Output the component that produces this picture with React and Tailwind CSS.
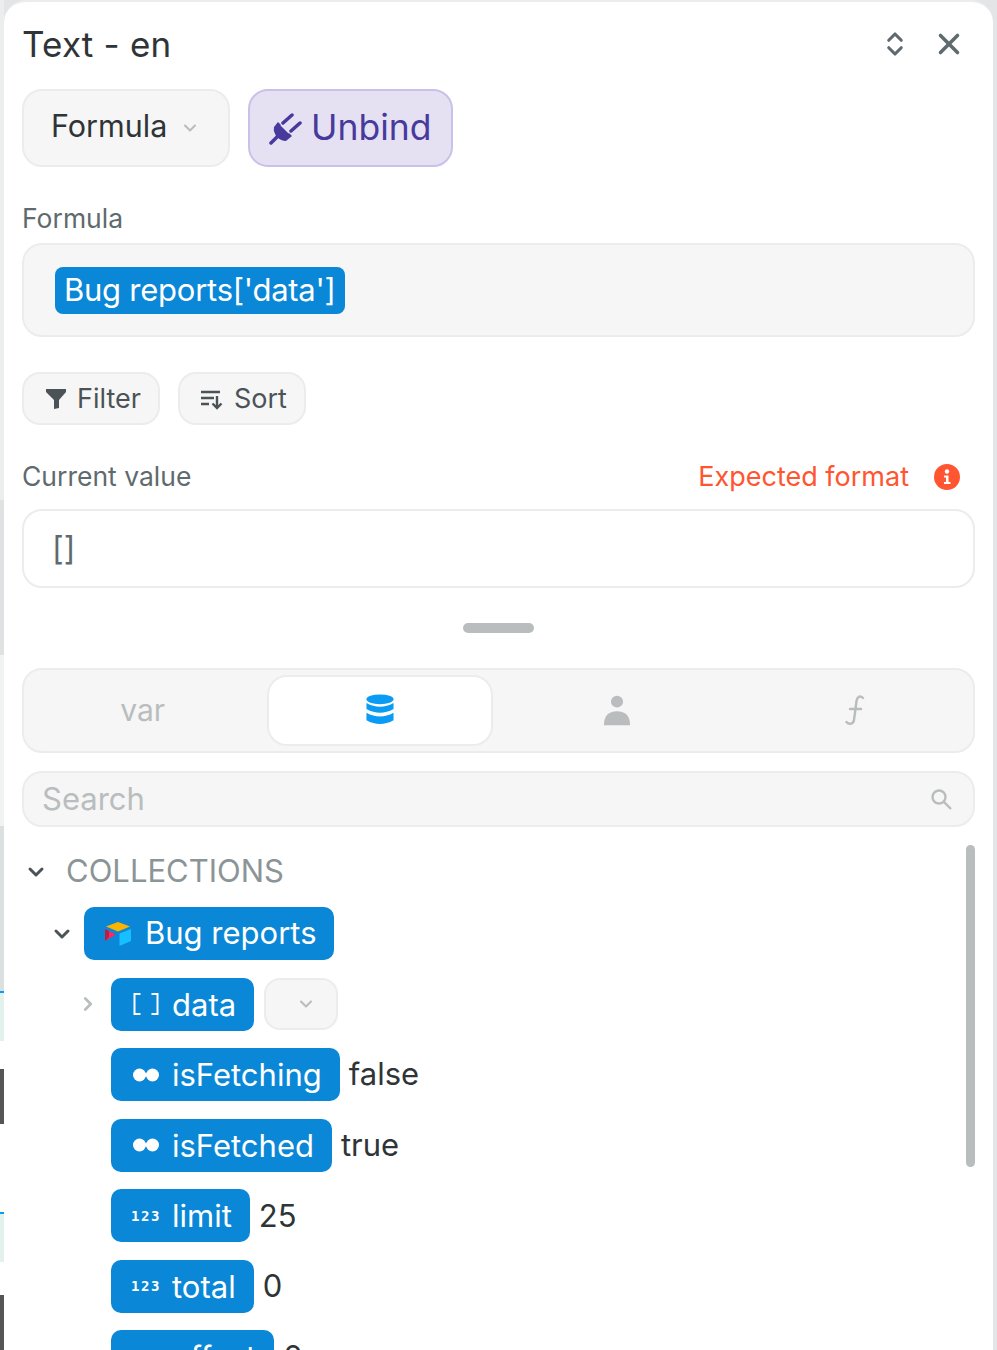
import React from 'react'
import { ChevronDown, ChevronRight, ChevronsUpDown, X } from 'lucide-react'

const Chip = ({ icon, label, value, caret }) => (
	<div className="flex items-center h-[53px] mb-[17.6px] pl-[107px]">
		<div className="flex items-center h-[53px] pl-[21px] pr-[18px] rounded-[10px] bg-[#0a87d6] text-white text-[31px] leading-none">
			<span className="flex items-center justify-center w-[28px] mr-[12px]">{icon}</span>
			<span>{label}</span>
		</div>
		{value && <span className="ml-[9px] text-[31px] text-[#2f3437]">{value}</span>}
		{caret && (
			<div className="ml-[10px] flex items-center justify-center w-[74px] h-[52px] pl-[9px] rounded-[16px] bg-[#f6f6f6] border-2 border-[#ececec]">
				<ChevronDown size={20} strokeWidth={2.5} className="text-[#b9bdbe]" />
			</div>
		)}
	</div>
)

const Toggle = () => (
	<svg width="28" height="16" viewBox="0 0 28 16" fill="white">
		<circle cx="7.5" cy="8" r="6.5" />
		<circle cx="20.5" cy="8" r="6.5" />
		<rect x="13" y="6.5" width="2" height="3" />
	</svg>
)

const Numbers = () => (
	<span className="font-['DejaVu_Sans_Mono',monospace] font-bold text-[14px] leading-none tracking-[1.5px] text-white">123</span>
)

const Brackets = () => (
	<svg width="26" height="22" viewBox="0 0 26 22" fill="none" stroke="white" strokeWidth="2">
		<path d="M7.5 1 H1.5 V21 H7.5" />
		<path d="M18.5 1 H24.5 V21 H18.5" />
	</svg>
)

const Airtable = () => (
	<svg width="28" height="26" viewBox="0 0 28 26">
		<path d="M14 1 L26 5.5 L14 10.5 L2 5.5 Z" fill="#fcb400" />
		<path d="M15.5 12.5 L27 8 V20 L15.5 25 Z" fill="#18bfff" />
		<path d="M1 8 L12 13.5 L1 20 Z" fill="#f82b60" />
		<path d="M1 8 L5 10 V16 L1 20 Z" fill="#ba1e45" />
	</svg>
)

export default function App() {
	return (
		<div className="w-[997px] h-[1350px] overflow-hidden relative flex bg-[#e3e5e6] font-['Inter','Liberation_Sans',sans-serif]">
			{/* Page peeking out behind the panel */}
			<div className="w-[4px] shrink-0 flex flex-col">
				<div className="h-[500px] bg-[#eceded]" />
				<div className="h-[155px] bg-[#dfe1e2]" />
				<div className="h-[172px] bg-[#f1f2f2]" />
				<div className="h-[165px] bg-[#dcdfe0]" />
				<div className="h-[2px] bg-[#0a9bf5]" />
				<div className="h-[48px] bg-[#e3f1ec]" />
				<div className="h-[28px] bg-white" />
				<div className="h-[55px] bg-[#555]" />
				<div className="h-[88px] bg-white" />
				<div className="h-[2px] bg-[#0a9bf5]" />
				<div className="h-[48px] bg-[#e3f1ec]" />
				<div className="h-[33px] bg-white" />
				<div className="h-[55px] bg-[#555]" />
			</div>
			<div className="relative w-[989px] shrink-0 h-[1350px] bg-white rounded-t-[22px] border-t-2 border-[#ececec] overflow-hidden">
				<div className="pl-[18px] pr-[18px]">
					{/* Header */}
					<div className="flex items-center justify-between h-[84px]">
						<span className="text-[35px] text-[#2f3437] tracking-[0.2px]">Text - en</span>
						<div className="flex items-center gap-[22px] pr-[9px]">
							<ChevronsUpDown size={30} strokeWidth={2.5} className="text-[#5f6a6e]" />
							<X size={34} strokeWidth={2.5} className="text-[#5f6a6e]" />
						</div>
					</div>

					{/* Mode buttons */}
					<div className="flex gap-[18px] mt-[3px]">
						<div className="flex items-center w-[208px] h-[78px] pl-[27px] pb-[4px] rounded-[20px] bg-[#f6f6f6] border-2 border-[#ececec] text-[#2f3437] text-[30.5px]">
							<span>Formula</span>
							<ChevronDown size={20} strokeWidth={2.5} className="ml-[13px] mt-[4px] text-[#b9bdbe]" />
						</div>
						<div className="flex items-center w-[205px] h-[78px] pl-[19px] rounded-[20px] bg-[#e5e1f3] border-2 border-[#c9c1ea] text-[#473a9c] text-[35.5px]">
							<svg width="33" height="33" viewBox="0 0 33 33" fill="#473a9c" className="mr-[9px]">
								<path d="M2 31 L9 24 M14 11 L23 3 M22 19 L31 11" stroke="#473a9c" strokeWidth="3.5" strokeLinecap="round" />
								<path d="M9 10 L23 24 L17 29 Q12 29 8 25 Q4 20 5 15 Z" />
								<path d="M12 13 L20 21" stroke="#e5e1f3" strokeWidth="1.5" />
							</svg>
							<span>Unbind</span>
						</div>
					</div>

					{/* Formula */}
					<div className="mt-[34px] text-[26.5px] leading-[34px] text-[#5f6a6e]">Formula</div>
					<div className="mt-[8px] flex items-center h-[94px] pl-[31px] rounded-[20px] bg-[#f6f6f6] border-2 border-[#ececec]">
						<span className="flex items-center h-[47px] px-[9px] rounded-[8px] bg-[#0a87d6] text-white text-[31px] tracking-[-0.25px]">Bug reports['data']</span>
					</div>

					{/* Filter / Sort */}
					<div className="flex gap-[18px] mt-[35px]">
						<div className="flex items-center w-[138px] h-[53px] pl-[21px] pt-[1px] rounded-[18px] bg-[#f6f6f6] border-2 border-[#ececec] text-[27px] text-[#4b5356]">
							<svg width="22" height="22" viewBox="0 0 22 22" fill="#4b5356" className="mr-[10px]">
								<path d="M1 1 H21 V4 L14 12 V20 L9 21 V12 L1 4 Z" />
							</svg>
							<span>Filter</span>
						</div>
						<div className="flex items-center w-[128px] h-[53px] pl-[20px] pt-[1px] rounded-[18px] bg-[#f6f6f6] border-2 border-[#ececec] text-[27px] text-[#4b5356]">
							<svg width="23" height="21" viewBox="0 0 23 21" fill="none" stroke="#4b5356" strokeWidth="2.4" className="mr-[11px]">
								<path d="M1 3 H20 M1 9 H14 M1 15 H9 M17 7 V19 M12.5 14.5 L17 19 L21.5 14.5" />
							</svg>
							<span>Sort</span>
						</div>
					</div>

					{/* Current value */}
					<div className="flex items-center justify-between mt-[27px] h-[50px]">
						<span className="text-[26.5px] text-[#5f6a6e]">Current value</span>
						<div className="flex items-center pr-[15px]">
							<span className="text-[27px] text-[#ff5530]">Expected format</span>
							<svg width="26" height="26" viewBox="0 0 26 26" className="ml-[25px]">
								<circle cx="13" cy="13" r="13" fill="#ff5530" />
								<circle cx="13" cy="7.5" r="2.2" fill="white" />
								<path d="M10 11.5 H14.5 V18 H16.5 V20 H10 V18 H12 V13.5 H10 Z" fill="white" />
							</svg>
						</div>
					</div>
					<div className="mt-[7px] flex items-center h-[79px] pl-[28px] rounded-[20px] bg-white border-2 border-[#ececec] text-[32px] text-[#5f6a6e]">[]</div>

					{/* Resize handle */}
					<div className="flex justify-center mt-[35px]">
						<div className="w-[71px] h-[10px] rounded-full bg-[#b9bdbe]" />
					</div>

					{/* Tabs */}
					<div className="mt-[35px] grid grid-cols-4 items-center h-[85px] rounded-[20px] bg-[#f6f6f6] border-2 border-[#ececec]">
						<div className="flex items-center justify-center text-[30px] text-[#b9bdbe]">var</div>
						<div className="px-[6px]">
							<div className="flex items-center justify-center h-[71px] rounded-[20px] bg-white border-2 border-[#ececec]">
								<svg width="28" height="33" viewBox="0 0 30 44" fill="#0a9bf5" preserveAspectRatio="none">
									<ellipse cx="15" cy="7" rx="14.5" ry="6.5" />
									<path d="M0.5 12 Q15 22 29.5 12 V20 Q15 30 0.5 20 Z" />
									<path d="M0.5 25 Q15 35 29.5 25 V35 Q15 45 0.5 35 Z" />
								</svg>
							</div>
						</div>
						<div className="flex items-center justify-center">
							<svg width="28" height="31" viewBox="0 0 30 42" fill="#b9bdbe" preserveAspectRatio="none">
								<ellipse cx="15" cy="9" rx="6.5" ry="8" />
								<path d="M1 41 Q1 22 15 22 Q29 22 29 41 Z" />
							</svg>
						</div>
						<div className="flex items-center justify-center">
							<svg width="21" height="31" viewBox="0 0 21 31" fill="none" stroke="#b9bdbe" strokeWidth="2.4" strokeLinecap="round">
								<path d="M19 3 C16 0 13 2 12.5 6 L10 25 C9.5 29 5 30 2.5 27" />
								<path d="M6 14 H17" />
							</svg>
						</div>
					</div>

					{/* Search */}
					<div className="mt-[18px] flex items-center justify-between h-[56px] pl-[18px] pr-[21px] rounded-[20px] bg-[#f6f6f6] border-2 border-[#ececec]">
						<span className="text-[31px] text-[#b9bdbe]">Search</span>
						<svg width="21" height="21" viewBox="0 0 21 21" fill="none" stroke="#b9bdbe" strokeWidth="2.4">
							<circle cx="8" cy="8" r="6.5" />
							<path d="M12.8 12.8 L20 20" />
						</svg>
					</div>
				</div>

				{/* Tree */}
				<div className="relative mt-[17px]">
					<div className="absolute right-[18px] top-[1px] w-[9px] h-[322px] rounded-full bg-[#b9bdbe]" />
					<div className="flex items-center h-[56px] pl-[20px]">
						<ChevronDown size={24} strokeWidth={3} className="text-[#4b5356]" />
						<span className="ml-[18px] pb-[2px] text-[31px] text-[#8b9497]">COLLECTIONS</span>
					</div>
					<div className="flex items-center h-[53px] pl-[46px] mt-[7px] mb-[17.5px]">
						<ChevronDown size={24} strokeWidth={3} className="text-[#4b5356]" />
						<div className="ml-[10px] flex items-center h-[53px] pl-[20px] pr-[17px] rounded-[10px] bg-[#0a87d6] text-white text-[31px]">
							<Airtable />
							<span className="ml-[13px]">Bug reports</span>
						</div>
					</div>
					<div className="relative">
						<ChevronRight size={22} strokeWidth={3} className="absolute left-[73px] top-[15px] text-[#b9bdbe]" />
						<Chip icon={<Brackets />} label="data" caret />
					</div>
					<Chip icon={<Toggle />} label="isFetching" value="false" />
					<Chip icon={<Toggle />} label="isFetched" value="true" />
					<Chip icon={<Numbers />} label="limit" value="25" />
					<Chip icon={<Numbers />} label="total" value="0" />
					<Chip icon={<Numbers />} label="offset" value="0" />
				</div>
			</div>
		</div>
	)
}
